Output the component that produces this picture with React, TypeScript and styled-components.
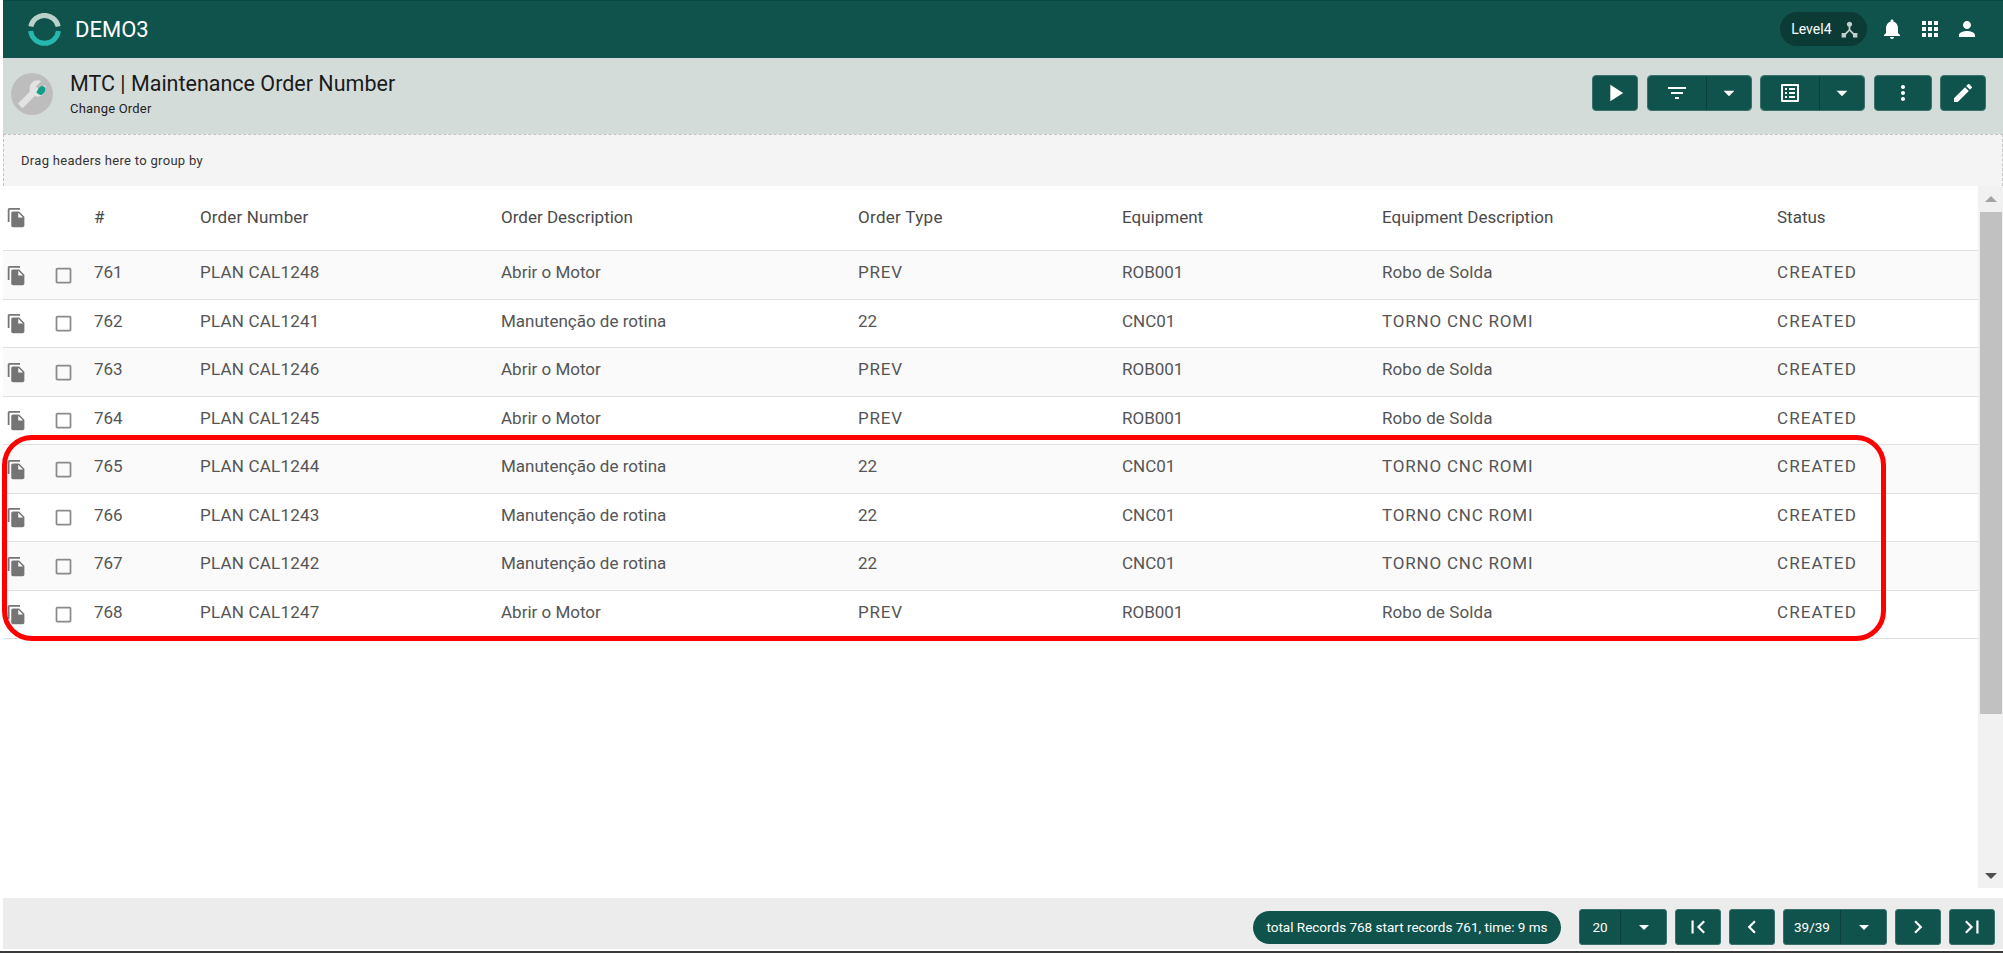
import React from "react";
import styled, { createGlobalStyle } from "styled-components";
import {
  MdApps,
  MdArrowDropDown,
  MdBuild,
  MdCheckBoxOutlineBlank,
  MdChevronLeft,
  MdChevronRight,
  MdDeviceHub,
  MdEdit,
  MdFileCopy,
  MdFilterList,
  MdFirstPage,
  MdLastPage,
  MdListAlt,
  MdMoreVert,
  MdNotifications,
  MdPerson,
  MdPlayArrow,
} from "react-icons/md";

type IRow = {
  id: number;
  order: string;
  description: string;
  type: string;
  equipment: string;
  equipmentDescription: string;
  status: string;
};

const motor = { description: "Abrir o Motor", type: "PREV", equipment: "ROB001", equipmentDescription: "Robo de Solda", status: "CREATED" };
const rotina = { description: "Manutenção de rotina", type: "22", equipment: "CNC01", equipmentDescription: "TORNO CNC ROMI", status: "CREATED" };

const rows: IRow[] = [
  { id: 761, order: "PLAN CAL1248", ...motor },
  { id: 762, order: "PLAN CAL1241", ...rotina },
  { id: 763, order: "PLAN CAL1246", ...motor },
  { id: 764, order: "PLAN CAL1245", ...motor },
  { id: 765, order: "PLAN CAL1244", ...rotina },
  { id: 766, order: "PLAN CAL1243", ...rotina },
  { id: 767, order: "PLAN CAL1242", ...rotina },
  { id: 768, order: "PLAN CAL1247", ...motor },
];

// capitals run wider in the original than in our Roboto
const tracking: Record<string, number> = {
  PREV: 0.8,
  CREATED: 1.1,
  "TORNO CNC ROMI": 0.8,
  "Robo de Solda": 0.1,
};

const App = () => {
  return (
    <Page>
      <GlobalStyle />
      <TopBar>
        <Brand>
          <svg width="33" height="33" viewBox="0 0 33 33" fill="none">
            <path d="M2.8 13.5 A14 14 0 0 1 30.2 13.5" stroke="#b9d0cb" strokeWidth="5" />
            <path d="M2.6 18 A14 14 0 0 0 30.4 18" stroke="#26b8ae" strokeWidth="5" />
          </svg>
          <BrandName>DEMO3</BrandName>
        </Brand>
        <TopActions>
          <LevelPill>
            <span>Level4</span>
            <MdDeviceHub size={21} color="#c3cfcc" />
          </LevelPill>
          <TopIcon><MdNotifications size={24} /></TopIcon>
          <TopIcon><MdApps size={24} /></TopIcon>
          <TopIcon><MdPerson size={24} /></TopIcon>
        </TopActions>
      </TopBar>

      <SubHeader>
        <TitleGroup>
          <Avatar>
            <WrenchIcon size={30} color="#e3e3e3" />
            <AvatarDot />
          </Avatar>
          <div>
            <Title>MTC | Maintenance Order Number</Title>
            <Subtitle>Change Order</Subtitle>
          </div>
        </TitleGroup>
        <Toolbar>
          <ToolButton $width={46}><MdPlayArrow size={28} /></ToolButton>
          <SplitButton>
            <ToolPart $width={58}><MdFilterList size={24} /></ToolPart>
            <ToolPart $width={45}><MdArrowDropDown size={26} /></ToolPart>
          </SplitButton>
          <SplitButton>
            <ToolPart $width={58}><MdListAlt size={24} /></ToolPart>
            <ToolPart $width={45}><MdArrowDropDown size={26} /></ToolPart>
          </SplitButton>
          <ToolButton $width={58}><MdMoreVert size={24} /></ToolButton>
          <ToolButton $width={46}><MdEdit size={24} /></ToolButton>
        </Toolbar>
      </SubHeader>

      <GroupBar>Drag headers here to group by</GroupBar>

      <GridArea>
        <Table>
          <HeaderRow>
            <CopyCell><MdFileCopy size={21} /></CopyCell>
            <span />
            <span>#</span>
            <Cell $tracking={0.15}>Order Number</Cell>
            <span>Order Description</span>
            <Cell $tracking={0.3}>Order Type</Cell>
            <span>Equipment</span>
            <span>Equipment Description</span>
            <span>Status</span>
          </HeaderRow>
          {rows.map((el, key) => (
            <DataRow key={el.id} $odd={key % 2 === 0}>
              <CopyCell><MdFileCopy size={21} /></CopyCell>
              <CheckCell><MdCheckBoxOutlineBlank size={21} /></CheckCell>
              <span>{el.id}</span>
              <Cell $tracking={0.2}>{el.order}</Cell>
              <span>{el.description}</span>
              <Cell $tracking={tracking[el.type] || 0}>{el.type}</Cell>
              <span>{el.equipment}</span>
              <Cell $tracking={tracking[el.equipmentDescription]}>{el.equipmentDescription}</Cell>
              <Cell $tracking={tracking[el.status]}>{el.status}</Cell>
            </DataRow>
          ))}
          <Highlight />
        </Table>
        <Scrollbar>
          <ArrowUp />
          <Thumb />
          <ArrowDown />
        </Scrollbar>
      </GridArea>

      <Footer>
        <RecordsPill>total Records 768 start records 761, time: 9 ms</RecordsPill>
        <Pager>
          <PagerSplit>
            <PagerValue $width={40}>20</PagerValue>
            <PagerCaret><MdArrowDropDown size={24} /></PagerCaret>
          </PagerSplit>
          <PagerButton><MdFirstPage size={26} /></PagerButton>
          <PagerButton><MdChevronLeft size={26} /></PagerButton>
          <PagerSplit>
            <PagerValue $width={56}>39/39</PagerValue>
            <PagerCaret><MdArrowDropDown size={24} /></PagerCaret>
          </PagerSplit>
          <PagerButton><MdChevronRight size={26} /></PagerButton>
          <PagerButton><MdLastPage size={26} /></PagerButton>
        </Pager>
      </Footer>
      <BottomEdge />
    </Page>
  );
};

export default App;

const GlobalStyle = createGlobalStyle`
  html, body {
    margin: 0;
    padding: 0;
    background: #fff;
    overflow: hidden;
  }
  * {
    box-sizing: border-box;
  }
`;

const Page = styled.div`
  width: 2003px;
  height: 953px;
  padding-left: 3px;
  display: flex;
  flex-direction: column;
  font-family: Roboto, "Liberation Sans", sans-serif;
  background: #fff;
`;

const TopBar = styled.header`
  height: 58px;
  flex: none;
  background: #10534c;
  border-top: 1px solid #0b4a43;
  display: flex;
  align-items: center;
  justify-content: space-between;
  padding: 0 17px 1px 25px;
  color: #fff;
`;

const Brand = styled.div`
  display: flex;
  align-items: center;
  gap: 14px;
`;

const BrandName = styled.span`
  font-size: 22px;
`;

const TopActions = styled.div`
  display: flex;
  align-items: center;
`;

const LevelPill = styled.div`
  width: 87px;
  height: 34px;
  border-radius: 17px;
  background: #0c3a35;
  display: flex;
  align-items: center;
  justify-content: flex-end;
  gap: 7px;
  padding-right: 7px;
  font-size: 14px;
  margin-right: 7px;
`;

const TopIcon = styled.span`
  width: 37.5px;
  display: flex;
  justify-content: center;
`;

const SubHeader = styled.div`
  height: 76px;
  flex: none;
  background: #d4dcd9;
  display: flex;
  justify-content: space-between;
  padding: 17px 17px 0 8px;
`;

const TitleGroup = styled.div`
  display: flex;
  gap: 17px;
`;

const Avatar = styled.div`
  position: relative;
  width: 42px;
  height: 42px;
  margin-top: -2px;
  border-radius: 50%;
  background: #bdbdbd;
  display: flex;
  align-items: center;
  justify-content: center;
`;

const WrenchIcon = styled(MdBuild)`
  transform: scaleX(-1);
`;

const AvatarDot = styled.span`
  position: absolute;
  top: 13px;
  left: 27px;
  width: 7px;
  height: 9px;
  border-radius: 50% 50% 50% 10%;
  transform: rotate(30deg);
  background: #0f9e88;
`;

const Title = styled.div`
  font-size: 21.5px;
  line-height: 22px;
  margin-top: -2px;
  color: #1a1a1a;
`;

const Subtitle = styled.div`
  font-size: 13px;
  line-height: 14px;
  margin-top: 7px;
  letter-spacing: 0.2px;
  color: #222;
`;

const Toolbar = styled.div`
  display: flex;
  gap: 8.5px;
  height: 36px;
`;

const ToolButton = styled.button<{ $width: number }>`
  width: ${(p) => p.$width}px;
  height: 36px;
  padding: 0;
  border: 1px solid #3c716b;
  border-radius: 4px;
  background: #10534c;
  color: #fff;
  display: flex;
  align-items: center;
  justify-content: center;
`;

const SplitButton = styled.div`
  display: flex;
  border-radius: 4px;
  overflow: hidden;
  border: 1px solid #3c716b;
`;

const ToolPart = styled.button<{ $width: number }>`
  width: ${(p) => p.$width}px;
  padding: 0;
  border: none;
  background: #10534c;
  color: #fff;
  display: flex;
  align-items: center;
  justify-content: center;
  & + & {
    border-left: 1px solid #0b413b;
  }
`;

const GroupBar = styled.div`
  height: 52px;
  flex: none;
  background: #f4f4f4;
  border-top: 1px dashed #c4c4c4;
  border-left: 1px dashed #c4c4c4;
  border-right: 1px dashed #c4c4c4;
  padding-left: 17px;
  display: flex;
  align-items: center;
  font-size: 13px;
  letter-spacing: 0.3px;
  color: #333;
`;

const GridArea = styled.div`
  flex: 1;
  min-height: 0;
  display: flex;
`;

const Table = styled.div`
  position: relative;
  flex: 1;
`;

const columns = "50px 41px 106px 301px 357px 264px 260px 395px 1fr";

const HeaderRow = styled.div`
  height: 65px;
  display: grid;
  grid-template-columns: ${columns};
  align-items: center;
  border-bottom: 1px solid #e0e0e0;
  font-size: 17px;
  color: #4a4a4a;
  padding-bottom: 2px;
`;

const DataRow = styled.div<{ $odd: boolean }>`
  height: 48.5px;
  display: grid;
  grid-template-columns: ${columns};
  align-items: center;
  background: ${(p) => (p.$odd ? "#fafafa" : "#fff")};
  border-bottom: 1px solid #e0e0e0;
  font-size: 17px;
  color: #555;
  & > span {
    margin-top: -5px;
  }
`;

const Cell = styled.span<{ $tracking: number }>`
  letter-spacing: ${(p) => p.$tracking}px;
  white-space: nowrap;
`;

const CopyCell = styled.span`
  display: flex;
  padding-left: 3px;
  color: #757575;
  && {
    margin-top: 1px;
  }
`;

const CheckCell = styled.span`
  display: flex;
  color: #8a8a8a;
  && {
    margin-top: 1px;
  }
`;

const Highlight = styled.div`
  position: absolute;
  left: -1px;
  top: 249px;
  width: 1884px;
  height: 206px;
  border: 5.5px solid #fe0000;
  border-radius: 30px;
  pointer-events: none;
`;

const Scrollbar = styled.div`
  width: 25px;
  flex: none;
  margin-bottom: 10px;
  background: #f1f1f1;
  display: flex;
  flex-direction: column;
  align-items: center;
`;

const ArrowUp = styled.span`
  margin-top: 10px;
  width: 0;
  height: 0;
  border-left: 6px solid transparent;
  border-right: 6px solid transparent;
  border-bottom: 6px solid #a3a3a3;
`;

const Thumb = styled.div`
  width: 22px;
  height: 502px;
  margin-top: 10px;
  background: #c1c1c1;
`;

const ArrowDown = styled.span`
  margin-top: 159px;
  width: 0;
  height: 0;
  border-left: 6px solid transparent;
  border-right: 6px solid transparent;
  border-top: 6px solid #505050;
`;

const Footer = styled.footer`
  height: 51px;
  flex: none;
  background: #ececec;
  display: flex;
  align-items: center;
  justify-content: flex-end;
  gap: 18px;
  padding: 7px 8px 0 0;
`;

const RecordsPill = styled.div`
  height: 33px;
  width: 308px;
  border-radius: 17px;
  background: #10534c;
  color: #fff;
  font-size: 13.5px;
  display: flex;
  align-items: center;
  justify-content: center;
  white-space: nowrap;
`;

const Pager = styled.div`
  display: flex;
  gap: 8px;
`;

const PagerButton = styled.button`
  width: 46px;
  height: 36px;
  padding: 0;
  border: 1px solid #3c716b;
  border-radius: 3px;
  background: #10534c;
  color: #fff;
  display: flex;
  align-items: center;
  justify-content: center;
`;

const PagerSplit = styled.div`
  display: flex;
  height: 36px;
  border: 1px solid #3c716b;
  border-radius: 3px;
  overflow: hidden;
  background: #10534c;
  color: #fff;
`;

const PagerValue = styled.span<{ $width: number }>`
  width: ${(p) => p.$width}px;
  display: flex;
  align-items: center;
  justify-content: center;
  font-size: 13.5px;
`;

const PagerCaret = styled.span`
  width: 46px;
  border-left: 1px solid #0b413b;
  display: flex;
  align-items: center;
  justify-content: center;
`;

const BottomEdge = styled.div`
  height: 4px;
  flex: none;
  margin-left: -3px;
  background: #3a3a3a;
  border-top: 2px solid #fff;
`;
